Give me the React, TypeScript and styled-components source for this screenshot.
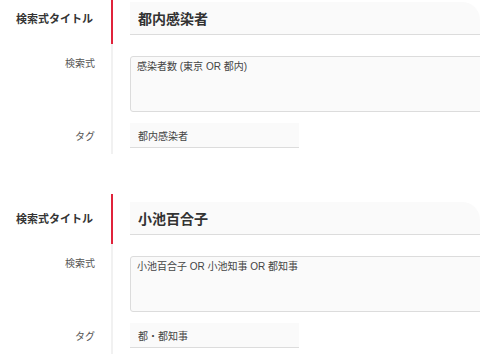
import React from "react";
import styled, { createGlobalStyle } from "styled-components";

const Global = createGlobalStyle`
  html, body { margin: 0; padding: 0; background: #fff; overflow: hidden; }
  body { font-family: "Liberation Sans", "Noto Sans CJK JP", sans-serif; color: #333; }
`;

const Page = styled.div`
  width: 480px;
  height: 360px;
  overflow: hidden;
  margin-top: -6px;
`;

const Block = styled.section`
  display: flex;
  flex-direction: column;
  margin-bottom: 40px;
`;

const Row = styled.div`
  display: flex;
`;

const Label = styled.div<{ $title?: boolean; $top?: number }>`
  width: 111px;
  box-sizing: border-box;
  flex: none;
  text-align: right;
  padding-right: ${(p) => (p.$title ? 18 : 16)}px;
  padding-top: ${(p) => p.$top ?? 0}px;
  display: flex;
  flex-direction: column;
  justify-content: ${(p) => (p.$title ? "center" : "flex-start")};
  font-size: ${(p) => (p.$title ? 11 : 10)}px;
  line-height: 14px;
  font-weight: ${(p) => (p.$title ? 700 : 400)};
  color: ${(p) => (p.$title ? "#333" : "#555")};
`;

const Field = styled.div<{ $accent?: boolean; $pt: number; $pb: number }>`
  flex: 1;
  min-width: 0;
  border-left: 2px solid ${(p) => (p.$accent ? "#e0233b" : "#f1f1f1")};
  padding: ${(p) => p.$pt}px 0 ${(p) => p.$pb}px 17px;
`;

const TitleInput = styled.input`
  appearance: none;
  display: block;
  box-sizing: border-box;
  width: 350px;
  height: 33px;
  margin: 0;
  border: none;
  border-bottom: 1px solid #dcdcdc;
  border-top-right-radius: 18px;
  background: #fafafa;
  padding: 0 0 0 8px;
  font-family: inherit;
  font-size: 14px;
  font-weight: 700;
  color: #333;
  outline: none;
`;

const QueryArea = styled.textarea`
  appearance: none;
  display: block;
  box-sizing: border-box;
  width: 400px;
  height: 56px;
  margin: 0;
  border: 1px solid #dcdcdc;
  border-radius: 3px;
  background: #fafafa;
  padding: 3px 6px;
  font-family: inherit;
  font-size: 10px;
  line-height: 14px;
  color: #444;
  resize: none;
  outline: none;
`;

const TagInput = styled.input`
  appearance: none;
  display: block;
  box-sizing: border-box;
  width: 169px;
  height: 25px;
  margin: 0;
  border: none;
  border-bottom: 1px solid #dcdcdc;
  background: #fafafa;
  padding: 0 0 0 8px;
  font-family: inherit;
  font-size: 10px;
  color: #444;
  outline: none;
`;

type Item = { title: string; query: string; tag: string };

const items: Item[] = [
  { title: "都内感染者", query: "感染者数 (東京 OR 都内)", tag: "都内感染者" },
  { title: "小池百合子", query: "小池百合子 OR 小池知事 OR 都知事", tag: "都・都知事" },
];

function SearchBlock({ item }: { item: Item }) {
  return (
    <Block>
      <Row>
        <Label $title>検索式タイトル</Label>
        <Field $accent $pt={8} $pb={9}>
          <TitleInput readOnly defaultValue={item.title} />
        </Field>
      </Row>
      <Row>
        <Label $top={13}>検索式</Label>
        <Field $pt={12} $pb={0}>
          <QueryArea readOnly defaultValue={item.query} />
        </Field>
      </Row>
      <Row>
        <Label $top={18}>タグ</Label>
        <Field $pt={11} $pb={6}>
          <TagInput readOnly defaultValue={item.tag} />
        </Field>
      </Row>
    </Block>
  );
}

export default function App() {
  return (
    <>
      <Global />
      <Page>
        {items.map((it) => (
          <SearchBlock key={it.title} item={it} />
        ))}
      </Page>
    </>
  );
}
